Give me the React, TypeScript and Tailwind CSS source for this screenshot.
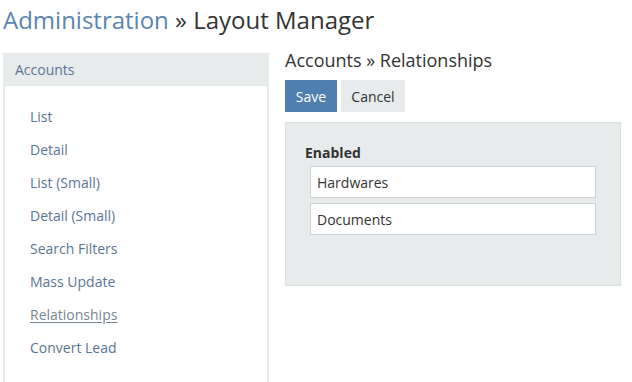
export default function App() {
  const items = ["List", "Detail", "List (Small)", "Detail (Small)", "Search Filters", "Mass Update", "Relationships", "Convert Lead"];
  return (
    <div className="w-[632px] h-[382px] overflow-hidden bg-white text-[#333] pl-[3px]" style={{ fontFamily: '"Open Sans", sans-serif' }}>
      <h1 className="text-[24px] leading-[32px] pt-[4px] h-[53px] font-normal">
        <span className="text-[#5a85b0]">Administration</span>
        <span className="text-[#333]"> » Layout Manager</span>
      </h1>
      <div className="flex items-start">
        <div className="w-[266px] h-[340px] border-x-2 border-[#e9ebec] shrink-0">
          <div className="h-[33px] bg-[#e8ebec] flex items-center text-[14px] text-[#5b7595] -mx-[2px] pl-[12px]">Accounts</div>
          <div className="pt-[14px] pl-[25px] flex flex-col">
            {items.map((it) => (
              <div key={it} className="h-[33px] leading-[33px] text-[14px]">
                {it === "Relationships" ? (
                  <span className="text-[#7a8593] underline underline-offset-2">{it}</span>
                ) : (
                  <span className="text-[#5b7595]">{it}</span>
                )}
              </div>
            ))}
          </div>
        </div>
        <div className="ml-[16px] w-[336px]">
          <div className="text-[18px] leading-[20px] -mt-[3px] h-[30px] text-[#333]">Accounts » Relationships</div>
          <div className="flex gap-[4px]">
            <button className="h-[32px] w-[52px] bg-[#4f7fb0] text-white text-[14px]">Save</button>
            <button className="h-[32px] w-[64px] bg-[#e8ebec] text-[#333] text-[14px]">Cancel</button>
          </div>
          <div className="mt-[10px] h-[164px] bg-[#e8ebec] border border-[#dcdfe0] pl-[19px] pt-[20px]">
            <div className="text-[14px] font-bold leading-[20px] text-[#333]">Enabled</div>
            <div className="ml-[5px] mt-[3px] w-[286px] flex flex-col gap-[5px]">
              <div className="h-[32px] bg-white border border-[#cfd2d4] flex items-center pl-[6px] text-[14px] text-[#333]">Hardwares</div>
              <div className="h-[32px] bg-white border border-[#cfd2d4] flex items-center pl-[6px] text-[14px] text-[#333]">Documents</div>
            </div>
          </div>
        </div>
      </div>
    </div>
  );
}
